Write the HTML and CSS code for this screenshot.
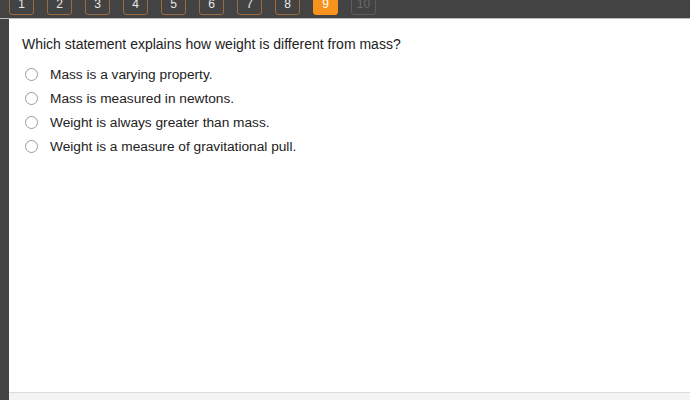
FILE: index.html
```html
<!DOCTYPE html>
<html lang="en">
<head>
  <meta charset="UTF-8" />
  <meta name="viewport" content="width=device-width, initial-scale=1.0"/>
  <title>Quiz</title>
  <link rel="stylesheet" href="styles.css">
</head>
<body>
  <div class="pager">
    <span class="page-btn">1</span>
    <span class="page-btn">2</span>
    <span class="page-btn">3</span>
    <span class="page-btn">4</span>
    <span class="page-btn">5</span>
    <span class="page-btn">6</span>
    <span class="page-btn">7</span>
    <span class="page-btn">8</span>
    <span class="page-btn current">9</span>
    <span class="page-btn locked">10</span>
  </div>

  <div class="question-panel">
    <div class="question">
      <p class="question-text">Which statement explains how weight is different from mass?</p>
      <ul class="answers">
        <li><span class="radio"></span>Mass is a varying property.</li>
        <li><span class="radio"></span>Mass is measured in newtons.</li>
        <li><span class="radio"></span>Weight is always greater than mass.</li>
        <li><span class="radio"></span>Weight is a measure of gravitational pull.</li>
      </ul>
    </div>
    <div class="panel-footer"></div>
  </div>
</body>
</html>
```

FILE: styles.css
```css
body {
  font-family: Arial, "Liberation Sans", sans-serif;
  margin: 0;
  padding: 0;
  background-color: #434343;
  height: 400px;
  overflow: hidden;
  display: flex;
  flex-direction: column;
}
.pager {
  display: flex;
  align-items: flex-end;
  gap: 13px;
  height: 19px;
  padding-left: 9px;
  padding-bottom: 3px;
  box-sizing: border-box;
  overflow: hidden;
  border-bottom: 1px solid #bdbdbd;
}
.page-btn {
  flex: none;
  width: 25px;
  height: 26px;
  box-sizing: border-box;
  border: 1px solid #9b6b3f;
  border-radius: 3px;
  color: #e8e8e8;
  font-size: 12px;
  text-align: center;
  padding-top: 8px;
  line-height: 12px;
}
.page-btn.current {
  background-color: #f7931d;
  border-color: #f7931d;
  color: #fff;
}
.page-btn.locked {
  border-color: #5c5c5c;
  color: #6a6a6a;
}
.question-panel {
  flex: 1;
  margin-left: 9px;
  background-color: #fff;
  display: flex;
  flex-direction: column;
}
.question {
  flex: 1;
  padding: 17px 13px 0;
}
.question-text {
  margin: 0 0 10px;
  font-size: 14px;
  color: #222;
  line-height: 16px;
}
.answers {
  list-style-type: none;
  margin: 0;
  padding: 0;
}
.answers li {
  display: flex;
  align-items: center;
  height: 24px;
  font-size: 13.7px;
  color: #222;
}
.radio {
  width: 11px;
  height: 11px;
  border: 1.5px solid #9a9a9a;
  border-radius: 50%;
  margin: 0 12px 0 3px;
}
.panel-footer {
  height: 7px;
  background-color: #f4f4f4;
  border-top: 1px solid #dcdcdc;
}
```
